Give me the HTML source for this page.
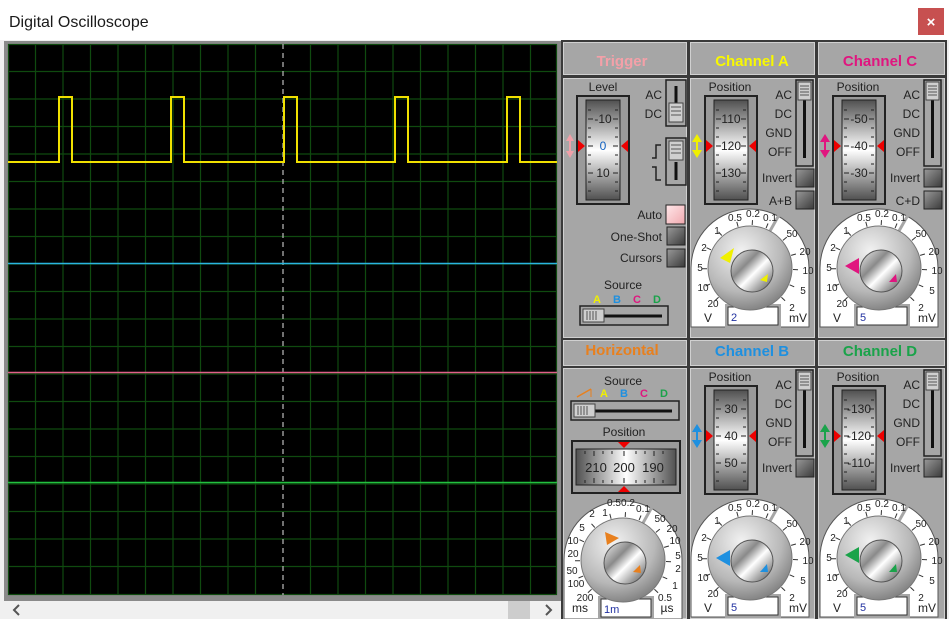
<!DOCTYPE html>
<html><head><meta charset="utf-8"><style>
html,body{margin:0;padding:0;width:949px;height:619px;overflow:hidden;background:#fff}
svg{display:block}
text{font-family:"Liberation Sans",Arial,sans-serif}
</style></head><body>
<svg width="949" height="619" viewBox="0 0 949 619" xmlns="http://www.w3.org/2000/svg">
<defs>
<linearGradient id="drumV" x1="0" y1="0" x2="0" y2="1">
<stop offset="0" stop-color="#505050"/><stop offset="0.5" stop-color="#ffffff"/><stop offset="1" stop-color="#505050"/></linearGradient>
<linearGradient id="drumH" x1="0" y1="0" x2="1" y2="0">
<stop offset="0" stop-color="#505050"/><stop offset="0.5" stop-color="#ffffff"/><stop offset="1" stop-color="#505050"/></linearGradient>
<radialGradient id="knobO" cx="0.4" cy="0.3" r="0.8">
<stop offset="0" stop-color="#f2f2f2"/><stop offset="0.6" stop-color="#b8b8b8"/><stop offset="1" stop-color="#707070"/></radialGradient>
<linearGradient id="knobI" x1="0" y1="0" x2="1" y2="1">
<stop offset="0" stop-color="#f4f4f4"/><stop offset="0.35" stop-color="#8a8a8a"/><stop offset="0.55" stop-color="#ffffff"/><stop offset="0.8" stop-color="#999"/><stop offset="1" stop-color="#555"/></linearGradient>
<linearGradient id="btn" x1="0" y1="0" x2="1" y2="1">
<stop offset="0" stop-color="#9a9a9a"/><stop offset="1" stop-color="#3a3a3a"/></linearGradient>
<linearGradient id="btnP" x1="0" y1="0" x2="1" y2="1">
<stop offset="0" stop-color="#ffe8ea"/><stop offset="1" stop-color="#f0a8ae"/></linearGradient>
<g id="dial">
<path d="M-59,59 L-59,0 A59,59 0 0 1 59,0 L59,59 Z" fill="#fff" stroke="#555" stroke-width="1"/>
<line x1="20" y1="-37" x2="29" y2="-53" stroke="#a6a6a6" stroke-width="3"/>
<g stroke="#333" stroke-width="1">
<line x1="-11.9" y1="-41.3" x2="-13.2" y2="-46.1"/><line x1="2.2" y1="-43" x2="2.5" y2="-47.9"/>
<line x1="16.1" y1="-39.9" x2="18" y2="-44.5"/><line x1="-28.2" y1="-32.5" x2="-31.5" y2="-36.2"/>
<line x1="-39" y1="-18.2" x2="-43.5" y2="-20.3"/><line x1="-43" y1="0.7" x2="-48" y2="0.8"/>
<line x1="-39.9" y1="16.1" x2="-44.5" y2="18"/><line x1="-31.4" y1="29.3" x2="-35.1" y2="32.7"/>
<line x1="32.9" y1="-27.6" x2="36.8" y2="-30.9"/><line x1="41.1" y1="-12.6" x2="45.9" y2="-14"/>
<line x1="43" y1="1.5" x2="48" y2="1.7"/><line x1="39.6" y1="16.8" x2="44.2" y2="18.8"/>
<line x1="31.4" y1="29.3" x2="35.1" y2="32.7"/>
</g>
<rect x="-25" y="36" width="56" height="24" fill="#a6a6a6"/>
<rect x="-22" y="39" width="50" height="18" fill="#fff" stroke="#333"/>
<circle cx="0" cy="0" r="42" fill="url(#knobO)" stroke="#777"/>
<circle cx="2" cy="3" r="21" fill="url(#knobI)" stroke="#555"/>
</g>
<g id="vdrum">
<rect x="0" y="0" width="52" height="108" fill="#9a9a9a" stroke="#222" stroke-width="2"/>
<rect x="9" y="4" width="34" height="100" fill="url(#drumV)" stroke="#222"/>
<g stroke="#222" stroke-width="1">
<line x1="11" y1="14" x2="14" y2="14"/><line x1="11" y1="23" x2="16" y2="23"/><line x1="11" y1="32" x2="14" y2="32"/><line x1="11" y1="41" x2="14" y2="41"/><line x1="11" y1="50" x2="16" y2="50"/><line x1="11" y1="59" x2="14" y2="59"/><line x1="11" y1="68" x2="14" y2="68"/><line x1="11" y1="77" x2="16" y2="77"/><line x1="11" y1="86" x2="14" y2="86"/><line x1="11" y1="95" x2="14" y2="95"/>
<line x1="38" y1="14" x2="41" y2="14"/><line x1="36" y1="23" x2="41" y2="23"/><line x1="38" y1="32" x2="41" y2="32"/><line x1="38" y1="41" x2="41" y2="41"/><line x1="36" y1="50" x2="41" y2="50"/><line x1="38" y1="59" x2="41" y2="59"/><line x1="38" y1="68" x2="41" y2="68"/><line x1="36" y1="77" x2="41" y2="77"/><line x1="38" y1="86" x2="41" y2="86"/><line x1="38" y1="95" x2="41" y2="95"/>
</g>
<polygon points="1,44 8,50 1,56" fill="#e00"/>
<polygon points="51,44 44,50 51,56" fill="#e00"/>
</g>
<g id="vslider">
<rect x="0" y="0" width="17" height="86" fill="#a6a6a6" stroke="#222" stroke-width="1.5"/>
<line x1="8.5" y1="20" x2="8.5" y2="78" stroke="#111" stroke-width="3"/>
<rect x="2" y="2" width="13" height="18" fill="#cfcfcf" stroke="#444"/>
<g stroke="#555"><line x1="4" y1="6" x2="13" y2="6"/><line x1="4" y1="9" x2="13" y2="9"/><line x1="4" y1="12" x2="13" y2="12"/><line x1="4" y1="15" x2="13" y2="15"/></g>
</g>
<g id="hslider">
<rect x="0" y="0" width="88" height="19" fill="#a6a6a6" stroke="#222" stroke-width="1.5"/>
<line x1="20" y1="10" x2="82" y2="10" stroke="#111" stroke-width="3"/>
<rect x="3" y="3" width="21" height="13" fill="#cfcfcf" stroke="#444"/>
<g stroke="#555"><line x1="7" y1="5" x2="7" y2="14"/><line x1="10" y1="5" x2="10" y2="14"/><line x1="13" y1="5" x2="13" y2="14"/><line x1="16" y1="5" x2="16" y2="14"/></g>
</g>
<g id="btnG"><rect x="0" y="0" width="18" height="18" fill="url(#btn)" stroke="#222"/></g>
</defs>

<rect x="0" y="0" width="949" height="40" fill="#fff"/>
<text x="9" y="27" font-size="16" fill="#1a1a1a">Digital Oscilloscope</text>
<rect x="918" y="8" width="26" height="27" fill="#c75050"/>
<text x="931" y="27" font-size="15" font-weight="bold" fill="#fff" text-anchor="middle">×</text>

<rect x="0" y="40" width="949" height="579" fill="#f0f0f0"/>
<rect x="4" y="41" width="557" height="560" fill="#8a8a8a"/>
<rect x="8" y="44" width="549" height="551" fill="#000"/>
<g stroke="#0f4a0f" stroke-width="1.2">
<path d="M35.5,44V595M63,44V595M90.5,44V595M118,44V595M145.5,44V595M173,44V595M200.5,44V595M228,44V595M255.5,44V595M310.5,44V595M338,44V595M365.5,44V595M393,44V595M420.5,44V595M448,44V595M475.5,44V595M503,44V595M530.5,44V595"/>
<path d="M8,71.5H557M8,99H557M8,126.5H557M8,154H557M8,181.5H557M8,209H557M8,236.5H557M8,264H557M8,291.5H557M8,319H557M8,346.5H557M8,374H557M8,401.5H557M8,429H557M8,456.5H557M8,484H557M8,511.5H557M8,539H557M8,566.5H557"/>
<rect x="8.5" y="44.5" width="548" height="550" fill="none"/>
</g>
<line x1="283" y1="44" x2="283" y2="595" stroke="#b0b0b0" stroke-width="1.3" stroke-dasharray="5,4"/>
<path d="M8,162H59V97H72V162H171V97H184V162H284V97H297V162H395V97H408V162H507V97H520V162H557" fill="none" stroke="#f0e000" stroke-width="2"/>
<line x1="8" y1="263.5" x2="557" y2="263.5" stroke="#2ab4e0" stroke-width="1.6"/>
<line x1="8" y1="372.5" x2="557" y2="372.5" stroke="#e0608a" stroke-width="1.6"/>
<line x1="8" y1="482.5" x2="557" y2="482.5" stroke="#22c040" stroke-width="1.6"/>

<rect x="4" y="601" width="557" height="18" fill="#f0f0f0"/>
<rect x="508" y="601" width="22" height="18" fill="#cdcdcd"/>
<path d="M19,605 L14,610 L19,615" fill="none" stroke="#555" stroke-width="2"/>
<path d="M546,605 L551,610 L546,615" fill="none" stroke="#555" stroke-width="2"/>

<rect x="561" y="40" width="386" height="579" fill="#3a3a3a"/>
<g fill="#a6a6a6" stroke="#d0d0d0" stroke-width="1">
<rect x="563.5" y="42.5" width="123" height="32"/><rect x="690.5" y="42.5" width="124" height="32"/><rect x="818.5" y="42.5" width="126" height="32"/>
<rect x="563.5" y="78.5" width="123" height="259"/><rect x="690.5" y="78.5" width="124" height="259"/><rect x="818.5" y="78.5" width="126" height="259"/>
<rect x="563.5" y="340.5" width="123" height="25"/><rect x="690.5" y="340.5" width="124" height="25"/><rect x="818.5" y="340.5" width="126" height="25"/>
<rect x="563.5" y="368.5" width="123" height="250"/><rect x="690.5" y="368.5" width="124" height="250"/><rect x="818.5" y="368.5" width="126" height="250"/>
</g>
<rect x="947" y="40" width="2" height="579" fill="#f0f0f0"/>

<g font-size="15" font-weight="bold" text-anchor="middle">
<text x="622" y="66" fill="#f4a0a8">Trigger</text>
<text x="752" y="66" fill="#f8f800">Channel A</text>
<text x="880" y="66" fill="#e0157f">Channel C</text>
<text x="622" y="355" fill="#e8801e">Horizontal</text>
<text x="752" y="356" fill="#1e90e0">Channel B</text>
<text x="880" y="356" fill="#1aa34a">Channel D</text>
</g>

<g font-size="12" fill="#222">
<text x="603" y="91" text-anchor="middle">Level</text>
<use href="#vdrum" x="577" y="96"/>
<g text-anchor="middle" font-size="12"><text x="603" y="123">-10</text><text x="603" y="150" fill="#1060c0">0</text><text x="603" y="177">10</text></g>
<path d="M570,134 L566,141 L569,141 L569,151 L566,151 L570,158 L574,151 L571,151 L571,141 L574,141 Z" fill="#f0a0a8"/>
<g text-anchor="end"><text x="662" y="99">AC</text><text x="662" y="118">DC</text>
<text x="662" y="219">Auto</text><text x="662" y="241">One-Shot</text><text x="662" y="262">Cursors</text></g>
<rect x="666" y="80" width="20" height="46" fill="#a6a6a6" stroke="#222" stroke-width="1.5"/>
<line x1="676" y1="86" x2="676" y2="104" stroke="#111" stroke-width="3"/>
<rect x="669" y="103" width="14" height="19" fill="#cfcfcf" stroke="#444"/>
<g stroke="#555"><line x1="671" y1="107" x2="681" y2="107"/><line x1="671" y1="111" x2="681" y2="111"/><line x1="671" y1="115" x2="681" y2="115"/></g>
<rect x="666" y="138" width="20" height="47" fill="#a6a6a6" stroke="#222" stroke-width="1.5"/>
<rect x="669" y="141" width="14" height="19" fill="#cfcfcf" stroke="#444"/>
<g stroke="#555"><line x1="671" y1="145" x2="681" y2="145"/><line x1="671" y1="149" x2="681" y2="149"/><line x1="671" y1="153" x2="681" y2="153"/></g>
<line x1="676" y1="162" x2="676" y2="180" stroke="#111" stroke-width="3"/>
<path d="M652,158 L656,158 L656,145 L661,145 M652,167 L656,167 L656,180 L661,180" fill="none" stroke="#222" stroke-width="1.5"/>
<rect x="666" y="205" width="19" height="19" fill="url(#btnP)" stroke="#222"/>
<use href="#btnG" x="667" y="227"/>
<use href="#btnG" x="667" y="249"/>
<text x="623" y="289" text-anchor="middle">Source</text>
<g font-weight="bold" font-size="11" text-anchor="middle"><text x="597" y="303" fill="#f0f000">A</text><text x="617" y="303" fill="#1e90e0">B</text><text x="637" y="303" fill="#e0157f">C</text><text x="657" y="303" fill="#1aa34a">D</text></g>
<use href="#hslider" x="580" y="306"/>
</g>

<g font-size="12" fill="#222">
<text x="730" y="91" text-anchor="middle">Position</text>
<use href="#vdrum" x="705" y="96"/>
<g text-anchor="middle"><text x="731" y="123">110</text><text x="731" y="150">120</text><text x="731" y="177">130</text></g>
<path d="M697,134 L692,142 L696,142 L696,150 L692,150 L697,158 L702,150 L698,150 L698,142 L702,142 Z" fill="#f0f000"/>
<g text-anchor="end"><text x="792" y="99">AC</text><text x="792" y="118">DC</text><text x="792" y="137">GND</text><text x="792" y="156">OFF</text><text x="792" y="182">Invert</text><text x="792" y="205">A+B</text></g>
<use href="#vslider" x="796" y="80"/>
<use href="#btnG" x="796" y="169"/><use href="#btnG" x="796" y="191"/>
</g>
<g transform="translate(750,268)" font-size="10" fill="#222" text-anchor="middle">
<use href="#dial"/>
<text x="-15" y="-47">0.5</text><text x="3" y="-51">0.2</text><text x="20" y="-47">0.1</text>
<text x="-33" y="-34">1</text><text x="-46" y="-17">2</text><text x="-50" y="3">5</text><text x="-47" y="23">10</text><text x="-37" y="39">20</text>
<text x="42" y="-31">50</text><text x="55" y="-13">20</text><text x="58" y="6">10</text><text x="53" y="26">5</text><text x="42" y="43">2</text>
<text x="-42" y="54" font-size="12">V</text><text x="48" y="54" font-size="12">mV</text>
<text x="-19" y="53" font-size="11" text-anchor="start" fill="#2030a0">2</text>
<polygon points="-30,-10 -16,-20 -20,-5" fill="#f0f000"/><polygon points="10,12 18,6 17,14" fill="#f0f000"/>
</g>

<g font-size="12" fill="#222">
<text x="858" y="91" text-anchor="middle">Position</text>
<use href="#vdrum" x="833" y="96"/>
<g text-anchor="middle"><text x="859" y="123">-50</text><text x="859" y="150">-40</text><text x="859" y="177">-30</text></g>
<path d="M825,134 L820,142 L824,142 L824,150 L820,150 L825,158 L830,150 L826,150 L826,142 L830,142 Z" fill="#e0157f"/>
<g text-anchor="end"><text x="920" y="99">AC</text><text x="920" y="118">DC</text><text x="920" y="137">GND</text><text x="920" y="156">OFF</text><text x="920" y="182">Invert</text><text x="920" y="205">C+D</text></g>
<use href="#vslider" x="924" y="80"/>
<use href="#btnG" x="924" y="169"/><use href="#btnG" x="924" y="191"/>
</g>
<g transform="translate(879,268)" font-size="10" fill="#222" text-anchor="middle">
<use href="#dial"/>
<text x="-15" y="-47">0.5</text><text x="3" y="-51">0.2</text><text x="20" y="-47">0.1</text>
<text x="-33" y="-34">1</text><text x="-46" y="-17">2</text><text x="-50" y="3">5</text><text x="-47" y="23">10</text><text x="-37" y="39">20</text>
<text x="42" y="-31">50</text><text x="55" y="-13">20</text><text x="58" y="6">10</text><text x="53" y="26">5</text><text x="42" y="43">2</text>
<text x="-42" y="54" font-size="12">V</text><text x="48" y="54" font-size="12">mV</text>
<text x="-19" y="53" font-size="11" text-anchor="start" fill="#2030a0">5</text>
<polygon points="-34,-2 -20,-10 -20,6" fill="#e0157f"/><polygon points="10,14 17,6 18,14" fill="#e0157f"/>
</g>

<g font-size="12" fill="#222">
<text x="623" y="385" text-anchor="middle">Source</text>
<line x1="577" y1="397" x2="591" y2="389" stroke="#e8801e" stroke-width="1.5"/><line x1="591" y1="389" x2="591" y2="397" stroke="#e8801e" stroke-width="1"/>
<g font-weight="bold" font-size="11" text-anchor="middle"><text x="604" y="397" fill="#f0f000">A</text><text x="624" y="397" fill="#1e90e0">B</text><text x="644" y="397" fill="#e0157f">C</text><text x="664" y="397" fill="#1aa34a">D</text></g>
<g transform="translate(571,401)"><rect x="0" y="0" width="108" height="19" fill="#a6a6a6" stroke="#222" stroke-width="1.5"/>
<line x1="20" y1="10" x2="101" y2="10" stroke="#111" stroke-width="3"/>
<rect x="3" y="3" width="21" height="13" fill="#cfcfcf" stroke="#444"/>
<g stroke="#555"><line x1="7" y1="5" x2="7" y2="14"/><line x1="10" y1="5" x2="10" y2="14"/><line x1="13" y1="5" x2="13" y2="14"/><line x1="16" y1="5" x2="16" y2="14"/></g></g>
<text x="624" y="436" text-anchor="middle">Position</text>
<rect x="572" y="441" width="108" height="52" fill="#9a9a9a" stroke="#222" stroke-width="2"/>
<rect x="576" y="449" width="100" height="36" fill="url(#drumH)" stroke="#222"/>
<g stroke="#222"><path d="M585,451v3M594,451v5M603,451v3M612,451v3M624,451v5M636,451v3M645,451v3M654,451v5M663,451v3M585,483v-3M594,483v-5M603,483v-3M612,483v-3M624,483v-5M636,483v-3M645,483v-3M654,483v-5M663,483v-3"/></g>
<g text-anchor="middle" font-size="13"><text x="596" y="472">210</text><text x="624" y="472">200</text><text x="653" y="472">190</text></g>
<polygon points="618,442 630,442 624,448" fill="#e00"/><polygon points="618,492 630,492 624,486" fill="#e00"/>
</g>
<g transform="translate(623,560)" font-size="10" fill="#222" text-anchor="middle">
<use href="#dial"/>
<text x="-18" y="-44">1</text><text x="-9" y="-54">0.5</text><text x="5" y="-54">0.2</text><text x="20" y="-48">0.1</text>
<text x="-31" y="-43">2</text><text x="-41" y="-29">5</text><text x="-50" y="-16">10</text><text x="-50" y="-3">20</text><text x="-51" y="14">50</text><text x="-47" y="27">100</text><text x="-38" y="41">200</text>
<text x="37" y="-38">50</text><text x="49" y="-28">20</text><text x="52" y="-16">10</text><text x="55" y="-1">5</text><text x="55" y="12">2</text><text x="52" y="29">1</text><text x="42" y="41">0.5</text>
<text x="-43" y="52" font-size="12">ms</text><text x="44" y="52" font-size="12">µs</text>
<text x="-19" y="53" font-size="11" text-anchor="start" fill="#2030a0">1m</text>
<polygon points="-18,-28 -4,-22 -16,-15" fill="#e8801e"/><polygon points="10,12 17,5 18,13" fill="#e8801e"/>
</g>

<g font-size="12" fill="#222">
<text x="730" y="381" text-anchor="middle">Position</text>
<use href="#vdrum" x="705" y="386"/>
<g text-anchor="middle"><text x="731" y="413">30</text><text x="731" y="440">40</text><text x="731" y="467">50</text></g>
<path d="M697,424 L692,432 L696,432 L696,440 L692,440 L697,448 L702,440 L698,440 L698,432 L702,432 Z" fill="#1e90e0"/>
<g text-anchor="end"><text x="792" y="389">AC</text><text x="792" y="408">DC</text><text x="792" y="427">GND</text><text x="792" y="446">OFF</text><text x="792" y="472">Invert</text></g>
<use href="#vslider" x="796" y="370"/>
<use href="#btnG" x="796" y="459"/>
</g>
<g transform="translate(750,558)" font-size="10" fill="#222" text-anchor="middle">
<use href="#dial"/>
<text x="-15" y="-47">0.5</text><text x="3" y="-51">0.2</text><text x="20" y="-47">0.1</text>
<text x="-33" y="-34">1</text><text x="-46" y="-17">2</text><text x="-50" y="3">5</text><text x="-47" y="23">10</text><text x="-37" y="39">20</text>
<text x="42" y="-31">50</text><text x="55" y="-13">20</text><text x="58" y="6">10</text><text x="53" y="26">5</text><text x="42" y="43">2</text>
<text x="-42" y="54" font-size="12">V</text><text x="48" y="54" font-size="12">mV</text>
<text x="-19" y="53" font-size="11" text-anchor="start" fill="#2030a0">5</text>
<polygon points="-34,0 -20,-8 -20,8" fill="#1e90e0"/><polygon points="10,14 17,6 18,14" fill="#1e90e0"/>
</g>

<g font-size="12" fill="#222">
<text x="858" y="381" text-anchor="middle">Position</text>
<use href="#vdrum" x="833" y="386"/>
<g text-anchor="middle"><text x="859" y="413">-130</text><text x="859" y="440">-120</text><text x="859" y="467">-110</text></g>
<path d="M825,424 L820,432 L824,432 L824,440 L820,440 L825,448 L830,440 L826,440 L826,432 L830,432 Z" fill="#1aa34a"/>
<g text-anchor="end"><text x="920" y="389">AC</text><text x="920" y="408">DC</text><text x="920" y="427">GND</text><text x="920" y="446">OFF</text><text x="920" y="472">Invert</text></g>
<use href="#vslider" x="924" y="370"/>
<use href="#btnG" x="924" y="459"/>
</g>
<g transform="translate(879,558)" font-size="10" fill="#222" text-anchor="middle">
<use href="#dial"/>
<text x="-15" y="-47">0.5</text><text x="3" y="-51">0.2</text><text x="20" y="-47">0.1</text>
<text x="-33" y="-34">1</text><text x="-46" y="-17">2</text><text x="-50" y="3">5</text><text x="-47" y="23">10</text><text x="-37" y="39">20</text>
<text x="42" y="-31">50</text><text x="55" y="-13">20</text><text x="58" y="6">10</text><text x="53" y="26">5</text><text x="42" y="43">2</text>
<text x="-42" y="54" font-size="12">V</text><text x="48" y="54" font-size="12">mV</text>
<text x="-19" y="53" font-size="11" text-anchor="start" fill="#2030a0">5</text>
<polygon points="-34,-3 -20,-11 -20,5" fill="#1aa34a"/><polygon points="10,14 17,6 18,14" fill="#1aa34a"/>
</g>
</svg>
</body></html>
